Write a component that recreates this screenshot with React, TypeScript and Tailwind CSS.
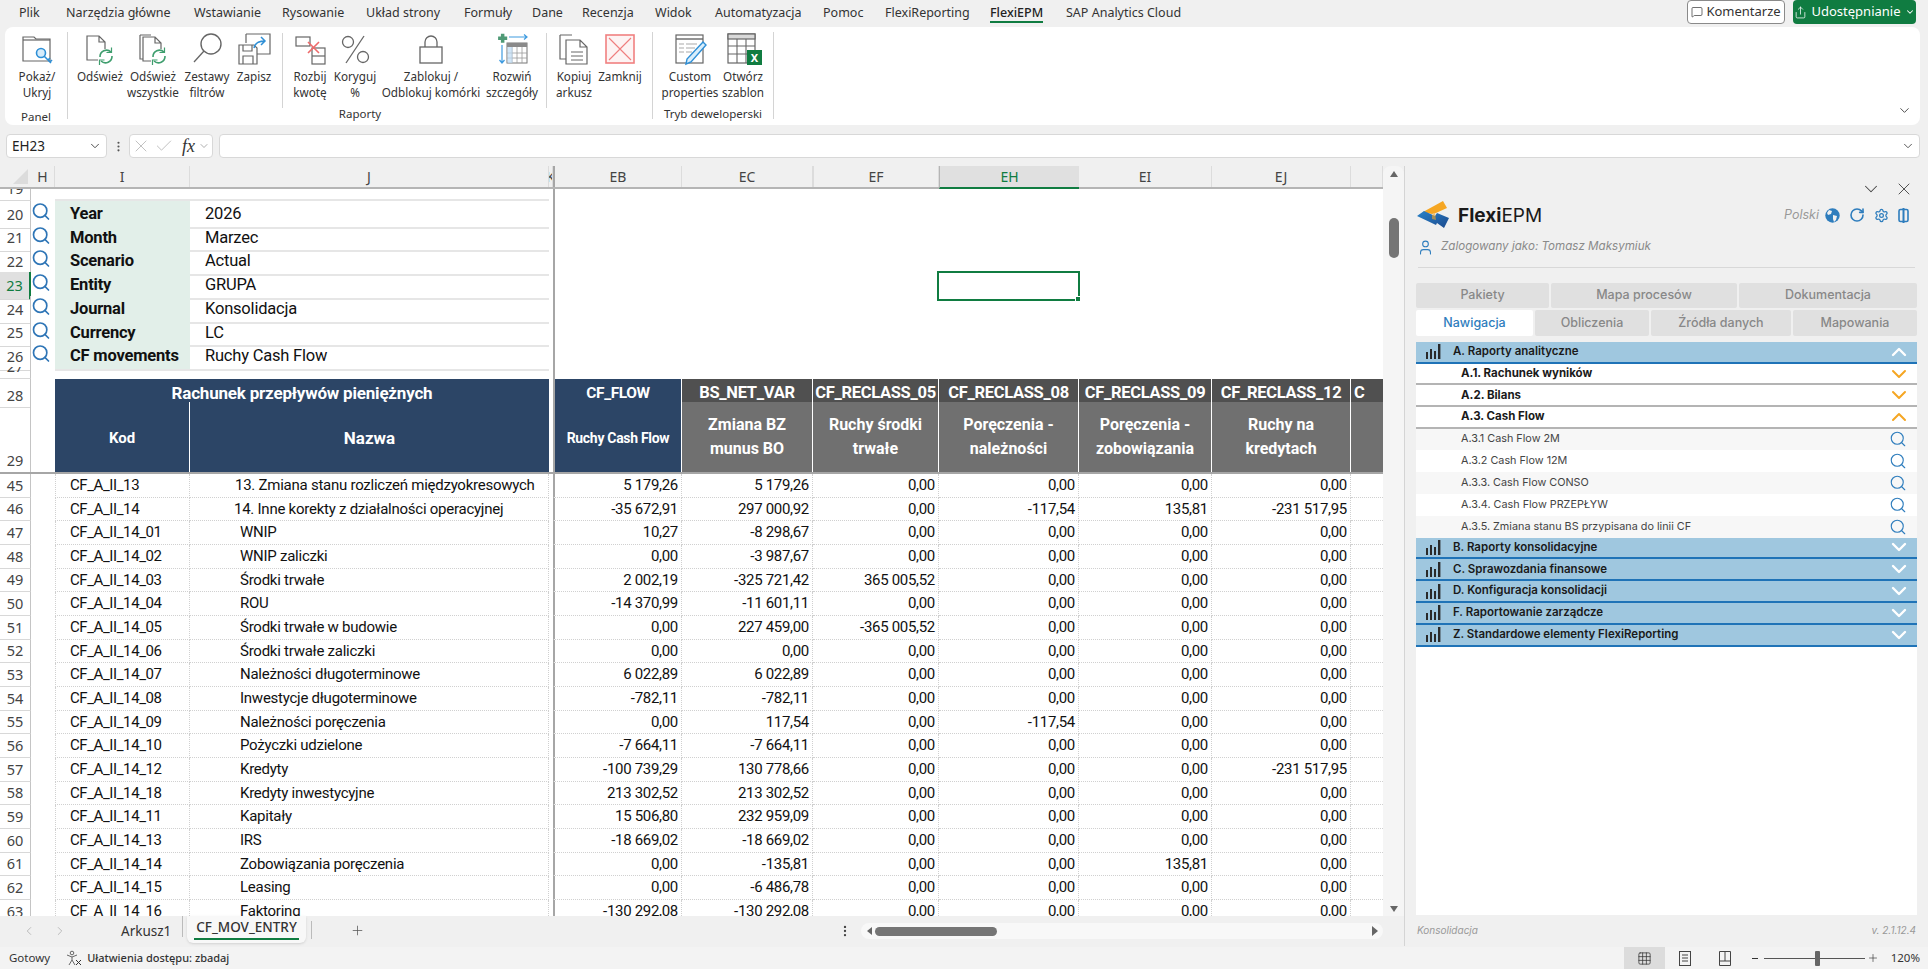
import React from "react";
import { Search, ChevronDown, ChevronUp, X, Check, ChevronLeft, ChevronRight, Plus, MessageSquare, Share, User, RotateCw, Settings, MoreVertical, Grid3x3 } from "lucide-react";

const G = "grid grid-cols-[31px_24px_135px_359px_4px_129px_131px_126px_140px_133px_139px_32px] shrink-0";
const FREEZE = "border-l-2 border-l-[#a6a6a6]";

const S = "#666";
const Doc = ({ x = 0, y = 0 }: { x?: number; y?: number }) => (
  <path d={`M${x + 4} ${y + 2}h12l6 6v18h-18z M${x + 16} ${y + 2}v6h6`} fill="#fff" stroke={S} strokeWidth="1.2" />
);
const Sync = () => (
  <g fill="none" stroke="#3f9e6e" strokeWidth="1.6">
    <path d="M16 24a6.5 6.5 0 0 1 11-5" />
    <path d="M28 23a6.5 6.5 0 0 1-11 5" />
    <path d="M27.5 14.5v5h-5M15.5 32v-5h5" strokeWidth="1.2" />
  </g>
);
const Ico = ({ children }: { children: React.ReactNode }) => (
  <svg width="32" height="32" viewBox="0 0 32 32" className="overflow-visible">{children}</svg>
);
const IconFolder = () => (
  <Ico>
    <path d="M2 4h11l2 2h14v22H2z" fill="#fff" stroke={S} strokeWidth="1.2" />
    <path d="M2 7h27" stroke={S} strokeWidth="1.2" />
    <circle cx="20" cy="20" r="4.5" fill="#d6ecfb" stroke="#2e8fd6" strokeWidth="1.6" />
    <path d="M23 23l7 7M27 27l2-2M29 29l2-2" stroke="#2e8fd6" strokeWidth="1.6" fill="none" />
  </Ico>
);
const IconDocRefresh = () => (
  <Ico>
    <Doc x={-1} y={1} />
    <rect x="14" y="16" width="16" height="16" fill="#fff" />
    <Sync />
  </Ico>
);
const IconDocsRefresh = () => (
  <Ico>
    <path d="M3 2h11M3 2v24h3" stroke={S} strokeWidth="1.2" fill="none" />
    <Doc x={2} y={2} />
    <rect x="14" y="16" width="16" height="16" fill="#fff" />
    <Sync />
  </Ico>
);
const IconFilter = () => (
  <Ico>
    <circle cx="20" cy="11" r="10" fill="#fff" stroke={S} strokeWidth="1.4" />
    <path d="M13 18L3 29" stroke={S} strokeWidth="1.3" />
  </Ico>
);
const IconSave = () => (
  <Ico>
    <path d="M8 1h24v20H16M8 1v9" fill="#fff" stroke={S} strokeWidth="1.2" />
    <path d="M1 12h15l3 3v16H1z" fill="#fff" stroke={S} strokeWidth="1.2" />
    <path d="M5 12v6h9v-6M5 31v-8h10v8" fill="none" stroke={S} strokeWidth="1.2" />
    <path d="M16 15c1-5 5-7 11-7M23 4l4 4-4 4" fill="none" stroke="#2e8fd6" strokeWidth="1.5" />
  </Ico>
);
const IconSplit = () => (
  <Ico>
    <rect x="2" y="4" width="14" height="9" fill="#fff" stroke={S} strokeWidth="1.2" />
    <rect x="18" y="15" width="13" height="16" fill="#fff" stroke={S} strokeWidth="1.2" />
    <path d="M18 23h13" stroke={S} strokeWidth="1.2" />
    <path d="M14 9l11 11M25 9L14 20" stroke="#ee6a6a" strokeWidth="1.6" />
  </Ico>
);
const IconPercent = () => (
  <Ico>
    <path d="M25 3L7 30" stroke={S} strokeWidth="1.3" />
    <circle cx="9" cy="9" r="5.5" fill="none" stroke={S} strokeWidth="1.3" />
    <circle cx="24" cy="24" r="5.5" fill="none" stroke={S} strokeWidth="1.3" />
  </Ico>
);
const IconLock = () => (
  <Ico>
    <rect x="5" y="14" width="22" height="16" fill="#fff" stroke={S} strokeWidth="1.3" />
    <path d="M10 14V9a6 6 0 0 1 12 0v5" fill="none" stroke={S} strokeWidth="1.3" />
  </Ico>
);
const IconExpand = () => (
  <Ico>
    <path d="M7 1h5v4h4v5h-4v4H7v-4H3V5h4z" fill="#4f9a76" transform="translate(0 0) scale(.7)" />
    <path d="M13 4h18M28 1.5L31 4l-3 2.5" fill="none" stroke="#3e9be0" strokeWidth="1.2" />
    <path d="M6 12v18M3.5 27l2.5 3 2.5-3" fill="none" stroke="#3e9be0" strokeWidth="1.2" />
    <rect x="11" y="10" width="20" height="20" fill="#fff" stroke="#777" strokeWidth="1" />
    <rect x="11" y="10" width="20" height="4" fill="#8a8a8a" />
    <path d="M11 20h20M11 25h20M16 14v16M21 14v16M26 14v16" stroke="#9a9a9a" strokeWidth=".8" />
    <rect x="11.5" y="14" width="5" height="16" fill="#bfdcf3" opacity=".7" />
  </Ico>
);
const IconCopy = () => (
  <Ico>
    <path d="M2 2h12M2 2v24h6" fill="none" stroke={S} strokeWidth="1.2" />
    <path d="M8 7h14l7 7v17H8z M22 7v7h7" fill="#fff" stroke={S} strokeWidth="1.2" />
    <path d="M13 19h12M13 23h12M13 27h12" stroke={S} strokeWidth="1" />
  </Ico>
);
const IconClose = () => (
  <Ico>
    <rect x="2" y="2" width="28" height="28" fill="#fdf3f3" stroke="#f08080" strokeWidth="1.6" />
    <path d="M5 5l22 22M27 5L5 27" stroke="#ef7d7d" strokeWidth="1.1" />
  </Ico>
);
const IconCustom = () => (
  <Ico>
    <rect x="2" y="2" width="27" height="28" fill="#fff" stroke={S} strokeWidth="1.2" />
    <path d="M2 6h27" stroke={S} strokeWidth="1.4" />
    <path d="M5 11h5M12 11h11M5 15h5M12 15h9M5 19h5M12 19h6" stroke="#aaa" strokeWidth="1.2" />
    <path d="M29 9l3 3-15 17-5 2 1-5z" fill="#d9eefb" stroke="#2e8fd6" strokeWidth="1.4" />
  </Ico>
);
const IconTemplate = () => (
  <Ico>
    <rect x="1" y="1" width="27" height="29" fill="#fff" stroke={S} strokeWidth="1.2" />
    <rect x="1" y="1" width="27" height="5" fill="#d9d9d9" stroke={S} strokeWidth="1.2" />
    <path d="M1 13h27M1 21h27M10 6v24M19 6v24" stroke={S} strokeWidth="1.1" />
  </Ico>
);

function Ribbon() {
  const Btn = ({ w, icon, l1, l2 }: { w: number; icon: React.ReactNode; l1: string; l2?: string }) => (
    <div style={{ width: w }} className="flex flex-col items-center shrink-0">
      <div className="h-[32px] flex items-center justify-center relative">{icon}</div>
      <div className="mt-[3px] text-[11.7px] leading-[16px] text-[#333] text-center whitespace-nowrap">{l1}</div>
      <div className="text-[11.7px] leading-[16px] text-[#333] text-center whitespace-nowrap h-[16px]">{l2}</div>
    </div>
  );
  const Sep = () => <div className="w-px self-stretch bg-[#d4d4d4] shrink-0 -mb-[8px]" />;
  return (
    <div className="mx-[5px] w-[1915px] h-[98px] bg-white rounded-[8px] flex pt-[5px] relative font-['Noto_Sans',sans-serif]">
      <div className="flex flex-col w-[62px] shrink-0">
        <div className="flex h-[71px] pt-px"><Btn w={64} icon={<IconFolder />} l1="Pokaż/" l2="Ukryj" /></div>
        <div className="text-[11.5px] leading-[16px] mt-[6px] text-center text-[#333]">Panel</div>
      </div>
      <div className="flex flex-col w-[586px] shrink-0 border-x border-[#d4d4d4] h-[87px]">
        <div className="flex h-[71px] pt-px">
          <Btn w={64} icon={<IconDocRefresh />} l1="Odśwież" />
          <Btn w={42} icon={<IconDocsRefresh />} l1="Odśwież" l2="wszystkie" />
          <Btn w={66} icon={<IconFilter />} l1="Zestawy" l2="filtrów" />
          <Btn w={28} icon={<IconSave />} l1="Zapisz" />
          <div className="w-[14px]" />
          <Sep />
          <Btn w={54} icon={<IconSplit />} l1="Rozbij" l2="kwotę" />
          <Btn w={36} icon={<IconPercent />} l1="Koryguj" l2="%" />
          <Btn w={116} icon={<IconLock />} l1="Zablokuj /" l2="Odblokuj komórki" />
          <Btn w={46} icon={<IconExpand />} l1="Rozwiń" l2="szczegóły" />
          <div className="w-[11px]" />
          <Sep />
          <Btn w={54} icon={<IconCopy />} l1="Kopiuj" l2="arkusz" />
          <Btn w={38} icon={<IconClose />} l1="Zamknij" />
        </div>
        <div className="text-[11.5px] leading-[16px] mt-[6px] text-center text-[#333]">Raporty</div>
      </div>
      <div className="flex flex-col w-[121px] shrink-0 border-r border-[#d4d4d4] h-[87px]">
        <div className="flex h-[71px] pt-px">
          <Btn w={74} icon={<IconCustom />} l1="Custom" l2="properties" />
          <div className="relative">
            <Btn w={32} icon={
              <div className="relative">
                <IconTemplate />
                <div className="absolute right-[-3px] bottom-0 w-[15px] h-[15px] bg-[#107c41] text-white text-[11px] font-bold leading-[15px] text-center">X</div>
              </div>
            } l1="Otwórz" l2="szablon" />
          </div>
        </div>
        <div className="text-[11.5px] leading-[16px] mt-[6px] text-center text-[#333] whitespace-nowrap">Tryb deweloperski</div>
      </div>
      <ChevronDown className="absolute right-[8px] bottom-[7px] text-[#444]" size={15} strokeWidth={1.5} />
    </div>
  );
}

function TabBar() {
  const tabs: [string, number][] = [
    ["Plik", 47], ["Narzędzia główne", 128], ["Wstawianie", 88], ["Rysowanie", 84], ["Układ strony", 98],
    ["Formuły", 68], ["Dane", 50], ["Recenzja", 73], ["Widok", 60], ["Automatyzacja", 108],
    ["Pomoc", 62], ["FlexiReporting", 105], ["FlexiEPM", 76], ["SAP Analytics Cloud", 130],
  ];
  return (
    <div className="h-[27px] shrink-0 flex pl-[19px] font-['Noto_Sans',sans-serif] text-[12.5px] text-[#333] relative">
      {tabs.map(([t, w]) => (
        <div key={t} style={{ width: w }} className="h-[23px] leading-[25px] shrink-0 whitespace-nowrap">
          {t === "FlexiEPM" ? (
            <span className="inline-block h-[23px] border-b-2 border-[#107c41] font-medium text-[#222]">{t}</span>
          ) : t}
        </div>
      ))}
      <div className="ml-auto flex gap-[8px] pr-[12px]">
        <div className="w-[98px] h-[24px] bg-white border border-[#8a8a8a] rounded-[4px] flex items-center justify-center gap-[3px]">
          <MessageSquare size={12} strokeWidth={1.4} />
          <span className="text-[13px]">Komentarze</span>
        </div>
        <div className="w-[123px] h-[24px] bg-[#107c41] rounded-[4px] text-white flex items-center justify-center gap-[4px]">
          <Share size={13} strokeWidth={1.4} />
          <span className="text-[13px]">Udostępnianie</span>
          <ChevronDown size={10} strokeWidth={2.5} />
        </div>
      </div>
    </div>
  );
}

function FormulaBar() {
  return (
    <div className="h-[24px] mt-[9px] shrink-0 flex items-stretch pl-[6px] pr-[8px] font-['Noto_Sans',sans-serif]">
      <div className="w-[101px] bg-white border border-[#d8d8d8] rounded-[4px] flex items-center justify-between pl-[5px] pr-[4px]">
        <span className="text-[13.5px] text-[#222]">EH23</span>
        <ChevronDown size={14} strokeWidth={1.6} className="text-[#444]" />
      </div>
      <div className="w-[22px] flex items-center justify-center"><MoreVertical size={13} className="text-[#555]" /></div>
      <div className="w-[84px] bg-white border border-[#d8d8d8] rounded-[4px] flex items-center pl-[1px] gap-[3px]">
        <X size={20} strokeWidth={1} className="text-[#b5b5b5]" />
        <Check size={20} strokeWidth={1} className="text-[#b5b5b5]" />
        <span className="ml-[5px] font-['Liberation_Serif',serif] italic font-medium text-[18px] leading-none text-[#333]">fx</span>
        <ChevronDown size={12} strokeWidth={1.2} className="text-[#777]" />
      </div>
      <div className="ml-[6px] flex-1 bg-white border border-[#d8d8d8] rounded-[4px] flex items-center justify-end pr-[4px]">
        <ChevronDown size={14} strokeWidth={1.5} className="text-[#444]" />
      </div>
    </div>
  );
}

function ColumnHeaders() {
  const cols = ["H", "I", "J", "K", "EB", "EC", "EF", "EH", "EI", "EJ", ""];
  return (
    <div className={`${G} h-[23px] border-b-2 border-[#b5b5b5] font-['Noto_Sans',sans-serif] text-[14px] text-[#444]`}>
      <div className="relative overflow-hidden">
        <div className="absolute right-[3px] bottom-[3px] w-0 h-0 border-l-[15px] border-l-transparent border-b-[15px] border-b-[#dcdcdc]" />
      </div>
      {cols.map((c, i) => (
        <div
          key={i}
          className={`flex items-center justify-center overflow-hidden ${c === "EH" ? "bg-[#e0e0e0] text-[#107c41] -mb-[2px] border-b-2 border-[#107c41] border-l border-l-[#b5b5b5]" : "border-r border-[#dcdcdc]"} ${c === "EB" ? FREEZE : ""} ${c === "EF" ? "border-l border-l-[#dcdcdc]" : ""}`}
        >
          {c}
        </div>
      ))}
    </div>
  );
}

const RowHead = ({ n, selected, className = "" }: { n: number; selected?: boolean; className?: string }) => (
  <div className={`flex items-end justify-center overflow-hidden border-b border-[#d8d8d8] font-['Noto_Sans',sans-serif] text-[14.5px] leading-[23px] ${selected ? "bg-[#e0e0e0] text-[#107c41] border-r-2 border-r-[#107c41]" : "text-[#444] border-r border-r-[#c4c4c4]"} ${className}`}>
    {n}
  </div>
);

function Filters() {
  const rows: [number, string, string][] = [
    [20, "Year", "2026"], [21, "Month", "Marzec"], [22, "Scenario", "Actual"], [23, "Entity", "GRUPA"],
    [24, "Journal", "Konsolidacja"], [25, "Currency", "LC"], [26, "CF movements", "Ruchy Cash Flow"],
  ];
  return (
    <>
      <div className={`${G} h-[12px]`}>
        <RowHead n={19} />
        <div />
        <div className="border-b-2 border-[#e6e6e6]" />
        <div className="border-b-2 border-[#e6e6e6]" />
        <div />
        <div className={`col-span-7 ${FREEZE}`} />
      </div>
      {rows.map(([n, a, b]) => (
        <div key={n} className={`${G} h-[23.72px]`}>
          <RowHead n={n} selected={n === 23} className="pb-[2px]" />
          <div className="flex justify-center pr-[4px]"><Search size={21} strokeWidth={2} className="text-[#2e75b6]" /></div>
          <div className="bg-[#e2efe9] border-b-2 border-[#e6e6e6] flex items-center pl-[15px] pt-[1px] font-bold text-[16.5px] tracking-[-0.2px] text-[#111]">{a}</div>
          <div className="border-b-2 border-[#e6e6e6] flex items-center pl-[15px] pt-[1px] text-[16.5px] tracking-[-0.2px] text-[#111]">{b}</div>
          <div />
          <div className={FREEZE} />
          <div /><div />
          <div className="relative">
            {n === 23 && (
              <div className="absolute -left-[2px] -right-[1px] -top-[1px] -bottom-[1px] border-2 border-[#107c41]">
                <div className="absolute -right-[3px] -bottom-[3px] w-[6px] h-[6px] bg-[#107c41] border border-white" />
              </div>
            )}
          </div>
          <div /><div /><div />
        </div>
      ))}
      <div className={`${G} h-[12px]`}>
        <RowHead n={27} />
        <div className="col-span-4" />
        <div className={`col-span-7 ${FREEZE}`} />
      </div>
    </>
  );
}

function TableHead() {
  const top = ["BS_NET_VAR", "CF_RECLASS_05", "CF_RECLASS_08", "CF_RECLASS_09", "CF_RECLASS_12"];
  const bottom = [["Zmiana BZ", "munus BO"], ["Ruchy środki", "trwałe"], ["Poręczenia -", "należności"], ["Poręczenia -", "zobowiązania"], ["Ruchy na", "kredytach"]];
  return (
    <>
      <div className={`${G} h-[23px]`}>
        <RowHead n={28} />
        <div />
        <div className="col-span-2 bg-[#2c4566] text-white font-bold text-[17px] tracking-[-0.2px] pt-[2px] flex items-center justify-center border-b border-white">Rachunek przepływów pieniężnych</div>
        <div />
        <div className={`bg-[#2c4566] text-white font-bold text-[15.5px] tracking-[-0.4px] pt-[2px] flex items-center justify-center border-b border-white border-r border-r-white ${FREEZE}`}>CF_FLOW</div>
        {top.map((t) => (
          <div key={t} className="bg-[#505050] text-white font-bold text-[16.5px] tracking-[-0.3px] pt-[2px] flex items-center justify-center border-b border-r border-white whitespace-nowrap overflow-hidden">{t}</div>
        ))}
        <div className="bg-[#505050] text-white font-bold text-[16.5px] pt-[2px] flex items-center pl-[3px] border-b border-white overflow-hidden">C</div>
      </div>
      <div className={`${G} h-[72px] border-b-2 border-[#a6a6a6]`}>
        <RowHead n={29} className="border-b-0" />
        <div />
        <div className="bg-[#2c4566] text-white font-bold text-[15px] pt-[3px] flex items-center justify-center border-r border-white">Kod</div>
        <div className="bg-[#2c4566] text-white font-bold text-[17px] pt-[3px] flex items-center justify-center">Nazwa</div>
        <div />
        <div className={`bg-[#2c4566] text-white font-bold text-[14px] tracking-[-0.3px] pt-[3px] flex items-center justify-center border-r border-white whitespace-nowrap ${FREEZE}`}>Ruchy Cash Flow</div>
        {bottom.map(([a, b]) => (
          <div key={a + b} className="bg-[#707070] text-white font-bold text-[16px] leading-[24px] flex flex-col items-center justify-center border-r border-white">
            <span>{a}</span><span>{b}</span>
          </div>
        ))}
        <div className="bg-[#707070]" />
      </div>
    </>
  );
}

const DATA: [number, string, string, number, string[]][] = [
  [45, "CF_A_II_13", "13. Zmiana stanu rozliczeń międzyokresowych", 45, ["5 179,26", "5 179,26"]],
  [46, "CF_A_II_14", "14. Inne korekty z działalności operacyjnej", 44, ["-35 672,91", "297 000,92", "0,00", "-117,54", "135,81", "-231 517,95"]],
  [47, "CF_A_II_14_01", "WNIP", 50, ["10,27", "-8 298,67"]],
  [48, "CF_A_II_14_02", "WNIP zaliczki", 50, ["0,00", "-3 987,67"]],
  [49, "CF_A_II_14_03", "Środki trwałe", 50, ["2 002,19", "-325 721,42", "365 005,52"]],
  [50, "CF_A_II_14_04", "ROU", 50, ["-14 370,99", "-11 601,11"]],
  [51, "CF_A_II_14_05", "Środki trwałe w budowie", 50, ["0,00", "227 459,00", "-365 005,52"]],
  [52, "CF_A_II_14_06", "Środki trwałe zaliczki", 50, ["0,00", "0,00"]],
  [53, "CF_A_II_14_07", "Należności długoterminowe", 50, ["6 022,89", "6 022,89"]],
  [54, "CF_A_II_14_08", "Inwestycje długoterminowe", 50, ["-782,11", "-782,11"]],
  [55, "CF_A_II_14_09", "Należności poręczenia", 50, ["0,00", "117,54", "0,00", "-117,54"]],
  [56, "CF_A_II_14_10", "Pożyczki udzielone", 50, ["-7 664,11", "-7 664,11"]],
  [57, "CF_A_II_14_12", "Kredyty", 50, ["-100 739,29", "130 778,66", "0,00", "0,00", "0,00", "-231 517,95"]],
  [58, "CF_A_II_14_18", "Kredyty inwestycyjne", 50, ["213 302,52", "213 302,52"]],
  [59, "CF_A_II_14_11", "Kapitały", 50, ["15 506,80", "232 959,09"]],
  [60, "CF_A_II_14_13", "IRS", 50, ["-18 669,02", "-18 669,02"]],
  [61, "CF_A_II_14_14", "Zobowiązania poręczenia", 50, ["0,00", "-135,81", "0,00", "0,00", "135,81", "0,00"]],
  [62, "CF_A_II_14_15", "Leasing", 50, ["0,00", "-6 486,78"]],
  [63, "CF_A_II_14_16", "Faktoring", 50, ["-130 292,08", "-130 292,08"]],
];

function DataRows() {
  const dot = "border-b border-r [border-bottom-style:dotted] [border-right-style:dotted] border-[#d0d0d0]";
  return (
    <>
      {DATA.map(([n, code, name, indent, vals]) => {
        const full = [0, 1, 2, 3, 4, 5].map((i) => vals[i] ?? "0,00");
        return (
          <div key={n} className={`${G} h-[23.66px] text-[15px] text-[#111]`}>
            <RowHead n={n} />
            <div />
            <div className={`${dot} border-l [border-left-style:dotted] flex items-center pl-[14px] whitespace-nowrap tracking-[-0.4px]`}>{code}</div>
            <div className={`${dot} flex items-center whitespace-nowrap tracking-[-0.25px]`} style={{ paddingLeft: indent }}>{name}</div>
            <div />
            {full.map((v, i) => (
              <div key={i} className={`${dot} flex items-center justify-end pr-[3px] whitespace-nowrap tracking-[-0.3px] ${i === 0 ? FREEZE : ""}`}>{v}</div>
            ))}
            <div className="border-b [border-bottom-style:dotted] border-[#d0d0d0]" />
          </div>
        );
      })}
    </>
  );
}

function Sheet() {
  return (
    <div className="flex h-[750px] shrink-0">
      <div className="w-[1383px] flex flex-col overflow-hidden">
        <ColumnHeaders />
        <div className="bg-white flex-1 flex flex-col overflow-hidden font-['Roboto',sans-serif]">
          <Filters />
          <TableHead />
          <DataRows />
        </div>
      </div>
      <div className="w-[21px] bg-[#f5f5f5] flex flex-col items-center rounded-t-[8px] pt-[5px]">
        <div className="w-0 h-0 border-x-[4px] border-x-transparent border-b-[6px] border-b-[#666]" />
        <div className="mt-[41px] w-[10px] h-[40px] rounded-full bg-[#757575]" />
        <div className="mt-auto mb-[4px] w-0 h-0 border-x-[4px] border-x-transparent border-t-[6px] border-t-[#666]" />
      </div>
    </div>
  );
}

function SheetTabs() {
  return (
    <div className="h-[31px] flex font-['Noto_Sans',sans-serif] text-[13.5px] text-[#333] shrink-0 w-[1404px]">
      <div className="w-[118px] flex items-start pt-[8px] pl-[22px] gap-[17px] text-[#aaa]">
        <ChevronLeft size={14} strokeWidth={1.3} />
        <ChevronRight size={14} strokeWidth={1.3} />
      </div>
      <div className="w-[65px] pt-[5px] leading-[20px] pl-[3px] border-r border-[#bbb] h-[21px] mt-[3px] -translate-y-[3px]">Arkusz1</div>
      <div className="ml-[4px] w-[119px] h-[27px] bg-[#f8f8f8] rounded-b-[6px] shadow-sm flex flex-col items-center px-[7px] pt-[1px]">
        <span className="font-medium text-[13.5px] leading-[20px] whitespace-nowrap">CF_MOV_ENTRY</span>
        <div className="w-full h-[2px] bg-[#107c41] mt-[1px]" />
      </div>
      <div className="w-px h-[18px] bg-[#bbb] ml-[5px] mt-[5px]" />
      <div className="w-[53px] flex justify-end pt-[7px] shrink-0"><Plus size={15} strokeWidth={1.2} className="text-[#555]" /></div>
      <div className="w-[491px] flex justify-end pt-[8px] pr-[4px] shrink-0"><MoreVertical size={14} className="text-[#444]" /></div>
      <div className="w-[522px] h-[16px] mt-[7px] ml-[5px] bg-[#f8f8f8] rounded-full flex items-center pl-[6px] pr-[5px] shrink-0">
        <div className="w-0 h-0 border-y-[4px] border-y-transparent border-r-[5px] border-r-[#666]" />
        <div className="ml-[3px] w-[122px] h-[9px] rounded-full bg-[#757575]" />
        <div className="ml-auto w-0 h-0 border-y-[5px] border-y-transparent border-l-[6px] border-l-[#666]" />
      </div>
    </div>
  );
}

const Bars = () => (
  <svg width="15" height="15" viewBox="0 0 15 15" className="shrink-0">
    <path d="M0 8h2v7H0zM4 5h2v10H4zM8 7h2v8H8zM12 0h2.4v15H12z" fill="#2a2a2a" />
  </svg>
);

function Panel() {
  const AccHead = ({ label, open }: { label: string; open?: boolean }) => (
    <div className="h-[21.8px] bg-[#9fc7df] border-b-2 border-[#1f73b7] flex items-center pl-[10px] pr-[6px] shrink-0">
      <Bars />
      <span className="ml-[12px] text-[11.5px] font-semibold text-[#1a1a1a] flex-1">{label}</span>
      {open ? <ChevronUp size={24} strokeWidth={2.4} className="text-white -my-[4px]" /> : <ChevronDown size={24} strokeWidth={2.4} className="text-white -my-[4px]" />}
    </div>
  );
  const Sub = ({ label, open }: { label: string; open?: boolean }) => (
    <div className="h-[21.6px] bg-white border-b-2 border-[#b4b4b4] flex items-center pl-[45px] pr-[6px] shrink-0">
      <span className="text-[11.5px] font-bold text-[#1a1a1a] flex-1">{label}</span>
      {open ? <ChevronUp size={24} strokeWidth={2} className="text-[#f5a623] -my-[4px]" /> : <ChevronDown size={24} strokeWidth={2} className="text-[#f5a623] -my-[4px]" />}
    </div>
  );
  const Leaf = ({ label, odd }: { label: string; odd?: boolean }) => (
    <div className={`h-[21.8px] flex items-center pl-[45px] pr-[10px] shrink-0 ${odd ? "bg-[#f7f7f7]" : "bg-white"}`}>
      <span className="text-[10.8px] text-[#444] flex-1">{label}</span>
      <Search size={18} strokeWidth={1.5} className="text-[#2e7dbd] -my-[2px]" />
    </div>
  );
  const Tab = ({ w, label, active }: { w: number; label: string; active?: boolean }) => (
    <div style={{ width: w }} className={`h-full flex items-center justify-center text-[12.5px] font-medium rounded-[2px] ${active ? "bg-white text-[#2e7dbd]" : "bg-[#e0e0e0] text-[#888]"}`}>{label}</div>
  );
  return (
    <div className="w-[524px] shrink-0 h-[780px] border-l border-[#d4d4d4] flex flex-col font-['Inter',sans-serif]">
      <div className="h-[12px] mt-[17px] flex justify-end gap-[12px] pr-[14px] shrink-0 items-center">
        <ChevronDown size={22} strokeWidth={1.1} className="text-[#444]" />
        <X size={20} strokeWidth={1.1} className="text-[#444]" />
      </div>
      <div className="h-[28px] mt-[6px] flex items-center pl-[12px] pr-[19px] shrink-0">
        <svg width="33" height="28" viewBox="0 0 33 28">
          <defs>
            <linearGradient id="lg" x1="0" y1="0" x2="1" y2="1">
              <stop offset="0" stopColor="#2a83c9" />
              <stop offset="1" stopColor="#1c4a8e" />
            </linearGradient>
          </defs>
          <path d="M6 11L26 0l4 7-11 5-4 1z" fill="#f5a623" />
          <path d="M0 15l7-5 11 5 2-3 12 5-5 10-7-5-1 2z" fill="url(#lg)" />
          <path d="M15 14l3-2 1 7-4-1z" fill="#f5a623" opacity=".6" />
        </svg>
        <span className="ml-[8px] text-[19px] text-[#1a1a1a] font-bold leading-none">Flexi<span className="font-normal">EPM</span></span>
        <span className="ml-auto text-[12.5px] italic text-[#999] mr-[6px]">Polski</span>
        <svg width="15" height="15" viewBox="0 0 15 15" className="mr-[9px]">
          <circle cx="7.5" cy="7.5" r="7.2" fill="#2e7dbd" />
          <path d="M4 2l3 1-1 3-3 1-1-2zM8 7l4 1-1 4-2 2-1-3z" fill="#f0f0f0" />
        </svg>
        <RotateCw size={16} strokeWidth={2.4} className="text-[#2e7dbd] mr-[9px]" />
        <Settings size={15} strokeWidth={2} className="text-[#2e7dbd] mr-[9px]" />
        <svg width="11" height="15" viewBox="0 0 11 15" fill="none" stroke="#2e7dbd" strokeWidth="1.6">
          <rect x="1" y="1.5" width="9" height="12" rx="1.5" />
          <path d="M5.5 0v15" strokeWidth="2" />
        </svg>
      </div>
      <div className="h-[16px] mt-[10px] flex items-center pl-[12px] shrink-0">
        <User size={17} strokeWidth={1.5} className="text-[#2e7dbd]" />
        <span className="ml-[7px] text-[11.6px] italic text-[#8a8a8a]">Zalogowany jako: Tomasz Maksymiuk</span>
      </div>
      <div className="h-px bg-[#d8d8d8] mt-[12px] mx-[13px] shrink-0" />
      <div className="flex gap-[2px] h-[25px] mt-[15px] ml-[11px] shrink-0">
        <Tab w={133} label="Pakiety" />
        <Tab w={186} label="Mapa procesów" />
        <Tab w={178} label="Dokumentacja" />
      </div>
      <div className="flex gap-[2px] h-[26px] mt-[2px] ml-[11px] shrink-0">
        <Tab w={117} label="Nawigacja" active />
        <Tab w={114} label="Obliczenia" />
        <Tab w={140} label="Źródła danych" />
        <Tab w={124} label="Mapowania" />
      </div>
      <div className="mt-[6px] ml-[11px] w-[501px] flex-1 bg-white flex flex-col overflow-hidden">
        <AccHead label="A. Raporty analityczne" open />
        <Sub label="A.1. Rachunek wyników" />
        <Sub label="A.2. Bilans" />
        <Sub label="A.3. Cash Flow" open />
        <Leaf label="A.3.1 Cash Flow 2M" odd />
        <Leaf label="A.3.2 Cash Flow 12M" />
        <Leaf label="A.3.3. Cash Flow CONSO" odd />
        <Leaf label="A.3.4. Cash Flow PRZEPŁYW" />
        <Leaf label="A.3.5. Zmiana stanu BS przypisana do linii CF" odd />
        <AccHead label="B. Raporty konsolidacyjne" />
        <AccHead label="C. Sprawozdania finansowe" />
        <AccHead label="D. Konfiguracja konsolidacji" />
        <AccHead label="F. Raportowanie zarządcze" />
        <AccHead label="Z. Standardowe elementy FlexiReporting" />
      </div>
      <div className="h-[31px] shrink-0 flex items-center justify-between pl-[12px] pr-[12px] text-[10px] italic text-[#999]">
        <span>Konsolidacja</span>
        <span>v. 2.1.12.4</span>
      </div>
    </div>
  );
}

function StatusBar() {
  return (
    <div className="h-[22px] shrink-0 bg-[#f3f3f3] flex items-center pl-[9px] font-['Noto_Sans',sans-serif] text-[11.5px] text-[#333]">
      <span>Gotowy</span>
      <svg width="16" height="16" viewBox="0 0 16 16" className="ml-[16px]" fill="none" stroke="#666" strokeWidth="1">
        <circle cx="6" cy="3" r="1.8" />
        <path d="M1 5l5 2 5-2M6 7v3l-3 5M6 10l3 5" />
        <path d="M10 10l5 5M15 10l-5 5" stroke="#333" />
      </svg>
      <span className="ml-[5px] font-medium text-[11px]">Ułatwienia dostępu: zbadaj</span>
      <div className="ml-auto flex items-center h-full">
        <div className="w-[41px] h-full bg-[#dcdcdc] flex items-center justify-center">
          <Grid3x3 size={15} strokeWidth={1.2} />
        </div>
        <svg width="14" height="15" viewBox="0 0 14 15" className="ml-[13px]" fill="none" stroke="#444">
          <rect x="1.5" y=".5" width="11" height="14" />
          <path d="M4 4h6M4 7h6M4 10h6" />
        </svg>
        <svg width="14" height="15" viewBox="0 0 14 15" className="ml-[26px]" fill="none" stroke="#444">
          <path d="M1.5 .5h11v14h-11zM1.5 10h11M7 .5v9.5" />
        </svg>
        <span className="ml-[20px] w-[6px] h-px bg-[#333]" />
        <div className="ml-[6px] w-[101px] h-px bg-[#555] relative">
          <div className="absolute left-[51px] -top-[7px] w-[5px] h-[15px] bg-[#666] rounded-[1px]" />
        </div>
        <Plus size={12} strokeWidth={1.3} className="ml-[2px]" />
        <span className="ml-[12px] mr-[8px] text-[11.5px]">120%</span>
      </div>
    </div>
  );
}

export default function App() {
  return (
    <div className="w-[1928px] h-[969px] overflow-hidden bg-[#f0f0f0] flex flex-col">
      <TabBar />
      <Ribbon />
      <FormulaBar />
      <div className="mt-[8px] flex flex-1 min-h-0">
        <div className="w-[1404px] shrink-0 flex flex-col">
          <Sheet />
          <SheetTabs />
        </div>
        <Panel />
      </div>
      <StatusBar />
    </div>
  );
}
